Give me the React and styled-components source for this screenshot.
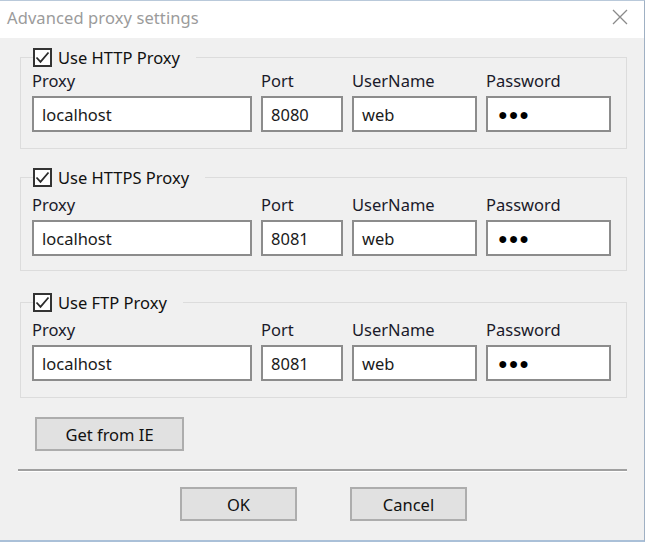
import React from "react";
import styled, { createGlobalStyle } from "styled-components";

const Global = createGlobalStyle`
  html, body { margin: 0; padding: 0; background: #ffffff; }
  body { width: 649px; height: 545px; overflow: hidden; font-family: "Noto Sans", "Open Sans", sans-serif; }
`;

const Window = styled.div`
  width: 645px;
  height: 542px;
  border-top: 1px solid #b9c9da;
  border-right: 1px solid #9fb0c3;
  border-bottom: 2px solid #aac0d8;
  display: flex;
  flex-direction: column;
  box-sizing: border-box;
`;

const TitleBar = styled.div`
  height: 37px;
  flex: none;
  box-sizing: border-box;
  background: #ffffff;
  display: flex;
  align-items: center;
  justify-content: space-between;
  padding: 0 16px 5px 7px;
`;

const Title = styled.div`
  font-size: 16.5px;
  color: #9b9b9b;
  letter-spacing: 0.1px;
`;

const CloseIcon = styled.svg`
  width: 16px;
  height: 16px;
  display: block;
`;

const Body = styled.div`
  flex: 1;
  background: #f0f0f0;
  padding: 9px 17px 0 20px;
  display: flex;
  flex-direction: column;
`;

const Group = styled.fieldset`
  margin: 0;
  margin-top: ${(p) => p.$gap}px;
  padding: ${(p) => p.$top}px 15px ${(p) => p.$bottom}px 11px;
  border: 1px solid #dcdcdc;
  min-width: 0;
`;

const Legend = styled.legend`
  padding: 0 16px 0 0;
  margin-left: 1px;
  display: flex;
  align-items: center;
  gap: 6px;
  height: 20px;
  font-size: 16.5px;
  color: #111;
`;

const Box = styled.span`
  width: 19px;
  height: 19px;
  flex: none;
  box-sizing: border-box;
  border: 2px solid #333333;
  background: #ffffff;
  display: flex;
  align-items: center;
  justify-content: center;
`;

const Grid = styled.div`
  display: grid;
  grid-template-columns: 220px 82px 125px 125px;
  column-gap: 9px;
  row-gap: 3px;
`;

const Label = styled.div`
  font-size: 16.5px;
  line-height: 24px;
  color: #1a1a2a;
`;

const Field = styled.div`
  height: 36px;
  box-sizing: border-box;
  border: 2px solid #8c8c8c;
  background: #ffffff;
  display: flex;
  align-items: center;
  padding: 0 8px;
  font-size: 16.5px;
  color: #1a1a1a;
`;

const Dots = styled.span`
  font-size: 16px;
  letter-spacing: 1px;
  color: #000;
  padding-left: 2px;
`;

const ButtonRow = styled.div`
  display: flex;
  justify-content: ${(p) => p.$justify};
  gap: 53px;
  padding-left: ${(p) => p.$pad}px;
  margin-top: ${(p) => p.$top}px;
`;

const Button = styled.div`
  width: ${(p) => p.$w}px;
  height: 34px;
  box-sizing: border-box;
  border: 2px solid #adadad;
  background: #e1e1e1;
  display: flex;
  align-items: center;
  justify-content: center;
  font-size: 16.5px;
  color: #111;
`;

const Separator = styled.div`
  height: 2px;
  background: #a0a0a0;
  border-bottom: 1px solid #ffffff;
  margin: 18px 0 0 -2px;
`;

const Check = () => (
  <svg width="15" height="15" viewBox="0 0 15 15">
    <path d="M1.5 7.5 L5.5 11.8 L13.5 2.5" fill="none" stroke="#2b2b2b" strokeWidth="1.8" />
  </svg>
);

const ProxyGroup = ({ title, port, gap, top, bottom }) => (
  <Group $gap={gap} $top={top} $bottom={bottom}>
    <Legend>
      <Box>
        <Check />
      </Box>
      {title}
    </Legend>
    <Grid>
      <Label>Proxy</Label>
      <Label>Port</Label>
      <Label>UserName</Label>
      <Label>Password</Label>
      <Field>localhost</Field>
      <Field>{port}</Field>
      <Field>web</Field>
      <Field>
        <Dots>●●●</Dots>
      </Field>
    </Grid>
  </Group>
);

export default function App() {
  return (
    <>
      <Global />
      <Window>
        <TitleBar>
          <Title>Advanced proxy settings</Title>
          <CloseIcon viewBox="0 0 16 16">
            <path d="M1 1 L15 15 M15 1 L1 15" stroke="#8a8a8a" strokeWidth="1.3" fill="none" />
          </CloseIcon>
        </TitleBar>
        <Body>
          <ProxyGroup title="Use HTTP Proxy" port="8080" gap={0} top={2} bottom={16} />
          <ProxyGroup title="Use HTTPS Proxy" port="8081" gap={18} top={6} bottom={14} />
          <ProxyGroup title="Use FTP Proxy" port="8081" gap={21} top={6} bottom={16} />
          <ButtonRow $justify="flex-start" $pad={15} $top={19}>
            <Button $w={149}>Get from IE</Button>
          </ButtonRow>
          <Separator />
          <ButtonRow $justify="center" $pad={0} $top={15}>
            <Button $w={117}>OK</Button>
            <Button $w={117}>Cancel</Button>
          </ButtonRow>
        </Body>
      </Window>
    </>
  );
}
